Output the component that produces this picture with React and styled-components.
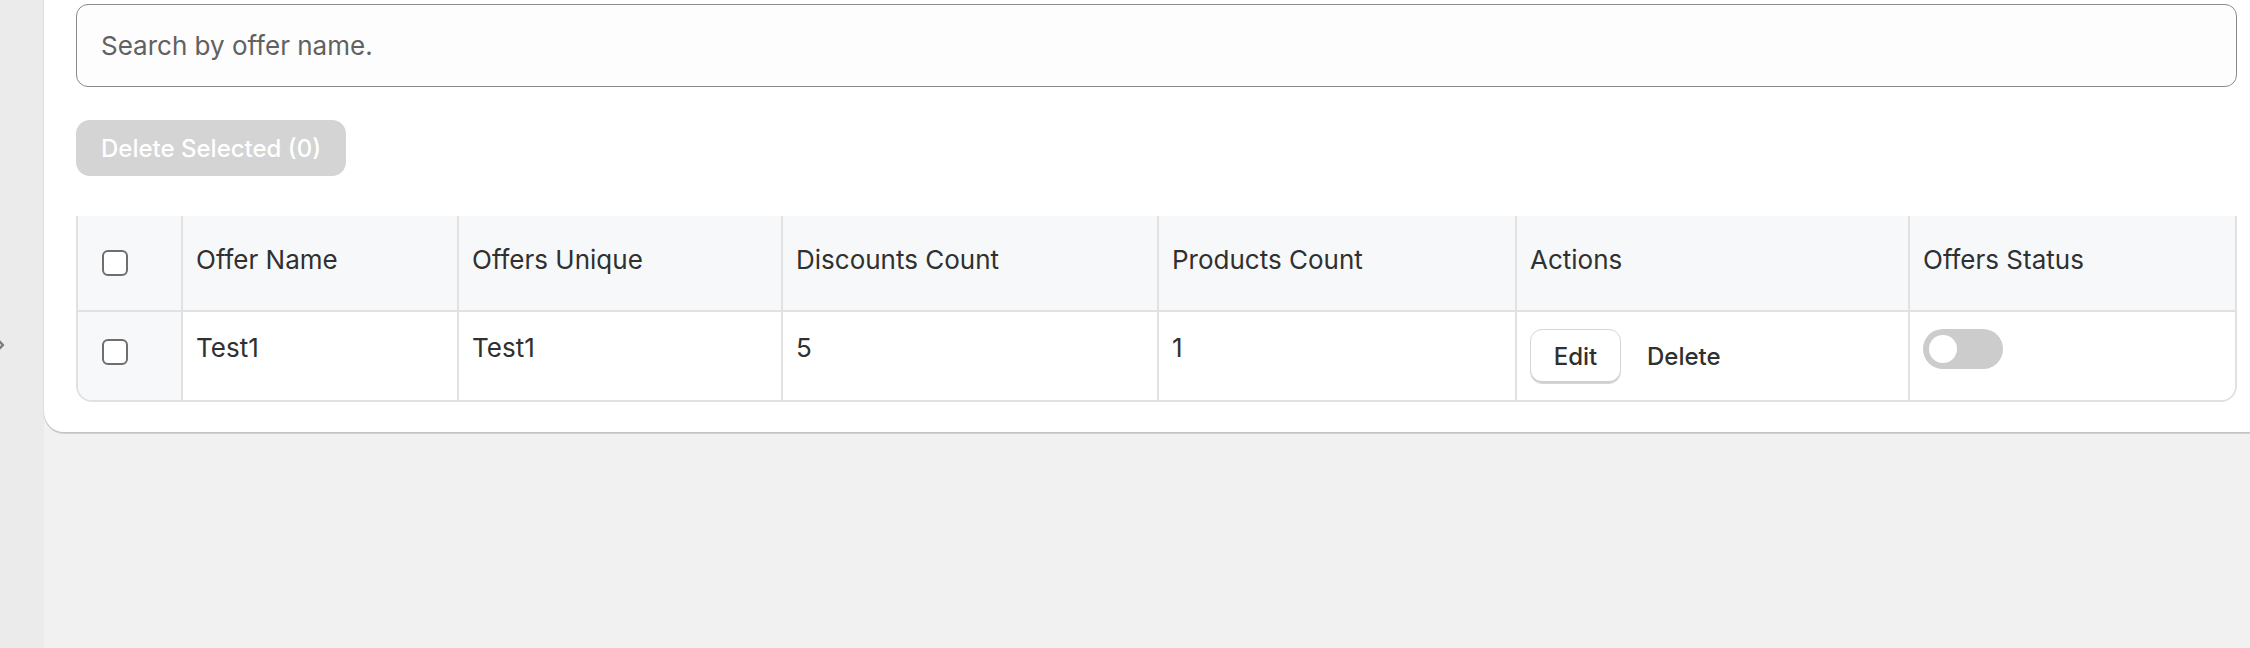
import styled, { createGlobalStyle } from "styled-components";

const GlobalStyle = createGlobalStyle`
  * {
    box-sizing: border-box;
  }
  body {
    margin: 0;
    background: #f1f1f1;
    font-family: Inter, "Noto Sans", sans-serif;
    color: #303030;
    overflow: hidden;
  }
`;

const columns = [
  { key: "select", label: "", width: 105 },
  { key: "name", label: "Offer Name", width: 276 },
  { key: "unique", label: "Offers Unique", width: 324 },
  { key: "discounts", label: "Discounts Count", width: 376 },
  { key: "products", label: "Products Count", width: 358 },
  { key: "actions", label: "Actions", width: 393 },
  { key: "status", label: "Offers Status", width: 325 },
];

const offers = [
  { id: 1, name: "Test1", unique: "Test1", discounts: 5, products: 1, active: false },
];

function App() {
  return (
    <>
      <GlobalStyle />
      <Page>
        <Sidebar>
          <Chevron width="16" height="16" viewBox="0 0 16 16">
            <path d="M5 3l5 5-5 5" fill="none" stroke="#7a7a7a" strokeWidth="2.4" strokeLinecap="round" strokeLinejoin="round" />
          </Chevron>
        </Sidebar>
        <Main>
          <Card>
            <SearchField placeholder="Search by offer name." />
            <BulkButton disabled>Delete Selected (0)</BulkButton>
            <TableWrap>
              <Table>
                <colgroup>
                  {columns.map((c) => (
                    <col key={c.key} style={{ width: c.width }} />
                  ))}
                </colgroup>
                <thead>
                  <tr>
                    {columns.map((c) => (
                      <HeadCell key={c.key} $first={c.key === "select"}>
                        {c.key === "select" ? <Check type="checkbox" /> : c.label}
                      </HeadCell>
                    ))}
                  </tr>
                </thead>
                <tbody>
                  {offers.map((o) => (
                    <tr key={o.id}>
                      <Cell $first>
                        <Check type="checkbox" $body />
                      </Cell>
                      <Cell>{o.name}</Cell>
                      <Cell>{o.unique}</Cell>
                      <Cell>{o.discounts}</Cell>
                      <Cell>{o.products}</Cell>
                      <Cell>
                        <Actions>
                          <EditButton>Edit</EditButton>
                          <PlainButton>Delete</PlainButton>
                        </Actions>
                      </Cell>
                      <Cell $last>
                        <Toggle $on={o.active}>
                          <Knob $on={o.active} />
                        </Toggle>
                      </Cell>
                    </tr>
                  ))}
                </tbody>
              </Table>
            </TableWrap>
          </Card>
        </Main>
      </Page>
    </>
  );
}

export default App;

const Page = styled.div`
  display: flex;
  width: 2250px;
  height: 648px;
`;

const Sidebar = styled.aside`
  width: 44px;
  flex-shrink: 0;
  background: #ebebeb;
  display: flex;
  flex-direction: column;
  padding-top: 337px;
`;

const Chevron = styled.svg`
  margin-left: -7px;
`;

const Main = styled.main`
  flex: 1;
  min-width: 0;
`;

const Card = styled.section`
  display: flex;
  flex-direction: column;
  align-items: flex-start;
  margin-right: -20px;
  padding: 4px 33px 30px 32px;
  background: #fff;
  border-radius: 0 0 0 20px;
  box-shadow: 0 2px 0 rgba(0, 0, 0, 0.13), 0 0 0 1px rgba(0, 0, 0, 0.06);
`;

const SearchField = styled.input`
  width: 100%;
  height: 83px;
  padding: 0 24px;
  border: 1.5px solid #8a8a8a;
  border-radius: 12px;
  background: #fdfdfd;
  font-family: inherit;
  font-size: 26px;
  color: #303030;
  outline: none;

  &::placeholder {
    color: #616161;
  }
`;

const BulkButton = styled.button`
  margin-top: 33px;
  height: 56px;
  padding: 0 25px;
  border: none;
  border-radius: 14px;
  background: #d4d4d4;
  color: #fff;
  font-family: inherit;
  font-size: 24px;
  font-weight: 550;
`;

const TableWrap = styled.div`
  width: 100%;
  margin-top: 40px;
  border: 2px solid #e1e1e1;
  border-top: none;
  border-radius: 0 0 16px 16px;
  overflow: hidden;
`;

const Table = styled.table`
  width: 100%;
  table-layout: fixed;
  border-collapse: separate;
  border-spacing: 0;
`;

const HeadCell = styled.th`
  height: 96px;
  padding: 0 13px 6px ${({ $first }) => ($first ? "24px" : "13px")};
  background: #f7f8fa;
  border-right: 2px solid #e1e1e1;
  border-bottom: 2px solid #e1e1e1;
  text-align: left;
  vertical-align: middle;
  font-size: 26px;
  font-weight: 400;
  line-height: 36px;
  white-space: nowrap;

  &:last-child {
    border-right: none;
  }
`;

const Cell = styled.td`
  height: 88px;
  padding: ${({ $first }) => ($first ? "27px 13px 0 24px" : "18px 13px 0")};
  background: ${({ $first }) => ($first ? "#f7f8fa" : "#fff")};
  border-right: ${({ $last }) => ($last ? "none" : "2px solid #e1e1e1")};
  vertical-align: top;
  font-size: 26px;
  line-height: 36px;
`;

const Check = styled.input`
  appearance: none;
  display: block;
  width: 26px;
  height: 26px;
  margin: ${({ $body }) => ($body ? "0" : "6px 0 0")};
  border: 2px solid #6e6e6e;
  border-radius: 6px;
  background: #fff;
`;

const Actions = styled.div`
  display: flex;
  align-items: center;
  margin-top: -1px;
`;

const EditButton = styled.button`
  width: 91px;
  height: 55px;
  border: 1.5px solid #d6d6d6;
  border-radius: 12px;
  background: #fff;
  box-shadow: inset 0 -2px 0 #cfcfcf;
  color: #303030;
  font-family: inherit;
  font-size: 24px;
  font-weight: 550;
`;

const PlainButton = styled.button`
  margin-left: 26px;
  padding: 0;
  border: none;
  background: none;
  color: #303030;
  font-family: inherit;
  font-size: 24px;
  font-weight: 550;
`;

const Toggle = styled.div`
  width: 80px;
  height: 40px;
  margin-top: -1px;
  padding: 6px;
  border-radius: 20px;
  background: ${({ $on }) => ($on ? "#303030" : "#cccccc")};
`;

const Knob = styled.div`
  width: 28px;
  height: 28px;
  border-radius: 50%;
  background: #fff;
  margin-left: ${({ $on }) => ($on ? "40px" : "0")};
`;
